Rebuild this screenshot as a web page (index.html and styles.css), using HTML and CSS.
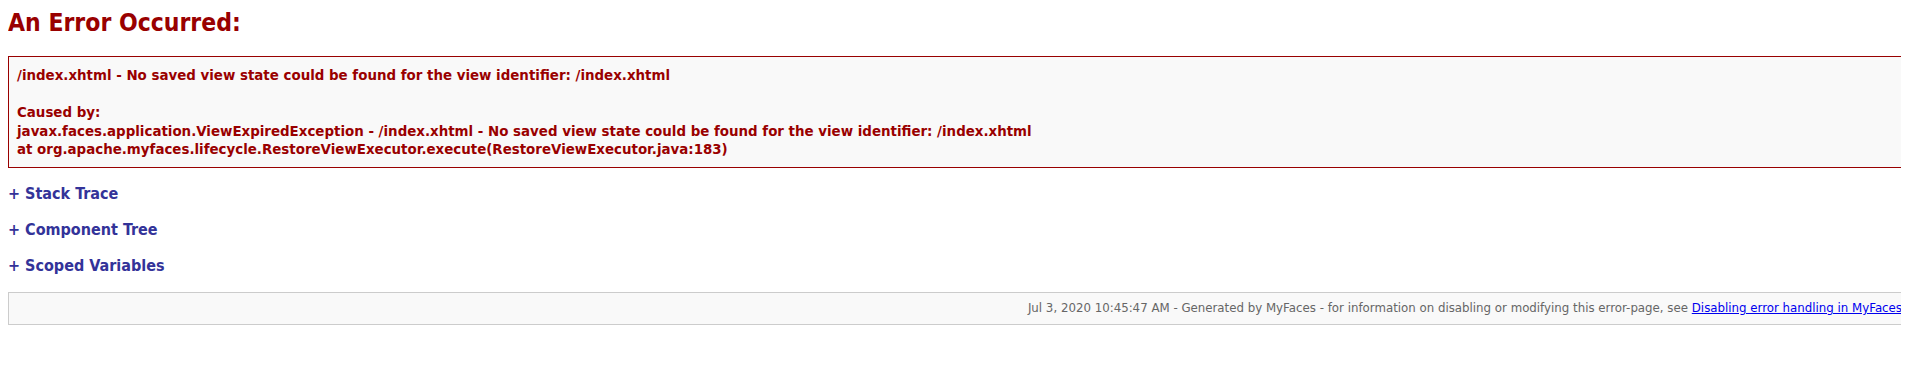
FILE: index.html
```html
<!DOCTYPE html>
<html lang="en">
<head>
	<meta charset="UTF-8">
	<title>An Error Occurred</title>
	<link rel="stylesheet" href="styles.css">
</head>
<body>
	<h1>An Error Occurred:</h1>

	<div class="error">
		/index.xhtml - No saved view state could be found for the view identifier: /index.xhtml<br />
		<br />
		Caused by:<br />
		javax.faces.application.ViewExpiredException - /index.xhtml - No saved view state could be found for the view identifier: /index.xhtml<br />
		at org.apache.myfaces.lifecycle.RestoreViewExecutor.execute(RestoreViewExecutor.java:183)
	</div>

	<div class="toggle"><a href="#trace">+ Stack Trace</a></div>
	<div class="toggle"><a href="#tree">+ Component Tree</a></div>
	<div class="toggle"><a href="#vars">+ Scoped Variables</a></div>

	<div class="footer">
		Jul 3, 2020 10:45:47 AM - Generated by MyFaces - for information on disabling or modifying this error-page, see <a href="#disable">Disabling error handling in MyFaces</a>
	</div>
</body>
</html>
```

FILE: styles.css
```css
body{
	margin: 8px;
	font-family: "DejaVu Sans", sans-serif;
	background-color: #fff;
}
h1{
	margin: 0 0 18px 0;
	font-family: "DejaVu Sans Condensed", "DejaVu Sans", sans-serif;
	font-stretch: condensed;
	font-size: 24.5px;
	line-height: 30px;
	font-weight: bold;
	color: #990000;
}
/* boxes run on to the right edge of the window, no right border */
.error{
	margin-right: -8px;
	padding: 10px 0 7px 8px;
	border: 1px solid #990000;
	border-right: none;
	background-color: #f9f9f9;
	color: #990000;
	font-size: 13.4px;
	line-height: 18.6px;
	font-weight: bold;
}
.toggle{
	margin-top: 16px;
	font-family: "DejaVu Sans Condensed", "DejaVu Sans", sans-serif;
	font-stretch: condensed;
	font-size: 16px;
	line-height: 20px;
	font-weight: bold;
}
.toggle:first-of-type{
	margin-top: 18px;
}
.toggle a{
	color: #333399;
	text-decoration: none;
}
.footer{
	margin: 16px -8px 0 0;
	padding: 7px 7px 8px 8px;
	border: 1px solid #cccccc;
	border-right: none;
	background-color: #f9f9f9;
	color: #666666;
	font-size: 11.8px;
	line-height: 16px;
	text-align: right;
}
.footer a{
	color: #0000ee;
}
```
